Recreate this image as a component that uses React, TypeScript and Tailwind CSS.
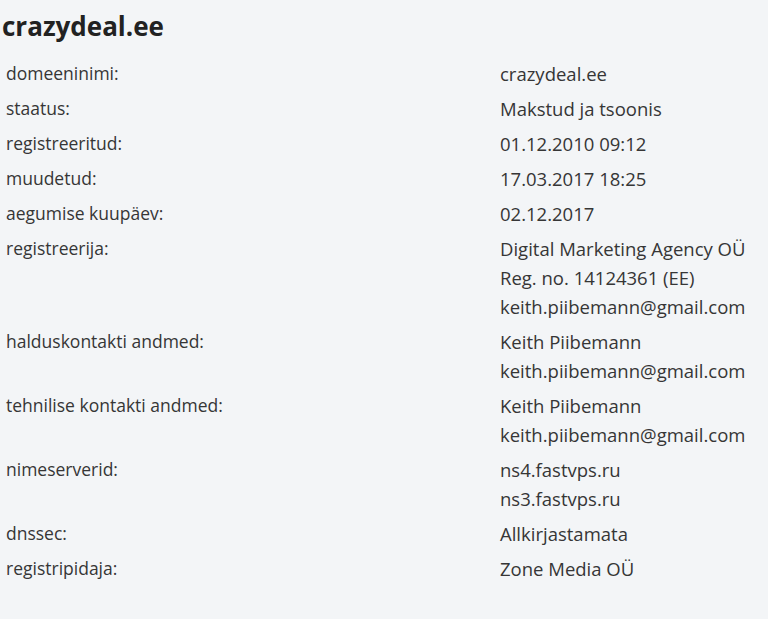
import React from "react";

const rows: [string, string[]][] = [
  ["domeeninimi:", ["crazydeal.ee"]],
  ["staatus:", ["Makstud ja tsoonis"]],
  ["registreeritud:", ["01.12.2010 09:12"]],
  ["muudetud:", ["17.03.2017 18:25"]],
  ["aegumise kuupäev:", ["02.12.2017"]],
  ["registreerija:", ["Digital Marketing Agency OÜ", "Reg. no. 14124361 (EE)", "keith.piibemann@gmail.com"]],
  ["halduskontakti andmed:", ["Keith Piibemann", "keith.piibemann@gmail.com"]],
  ["tehnilise kontakti andmed:", ["Keith Piibemann", "keith.piibemann@gmail.com"]],
  ["nimeserverid:", ["ns4.fastvps.ru", "ns3.fastvps.ru"]],
  ["dnssec:", ["Allkirjastamata"]],
  ["registripidaja:", ["Zone Media OÜ"]],
];

export default function App() {
  return (
    <div className="min-h-[619px] w-[768px] bg-[#f3f5f7] text-[#363636]" style={{ fontFamily: '"Open Sans", sans-serif' }}>
      <h1 className="pl-[2px] pt-[8px] h-[56px] text-[26px] font-bold leading-[36px] text-[#222222]">crazydeal.ee</h1>
      <div className="grid grid-cols-[494px_1fr] pl-[6px] leading-[29px]">
        {rows.map(([label, values]) => (
          <React.Fragment key={label}>
            <div className="py-[3px] text-[17.5px]">{label}</div>
            <div className="py-[3px] text-[18.5px]">
              {values.map((v) => (
                <div key={v}>{v}</div>
              ))}
            </div>
          </React.Fragment>
        ))}
      </div>
    </div>
  );
}
